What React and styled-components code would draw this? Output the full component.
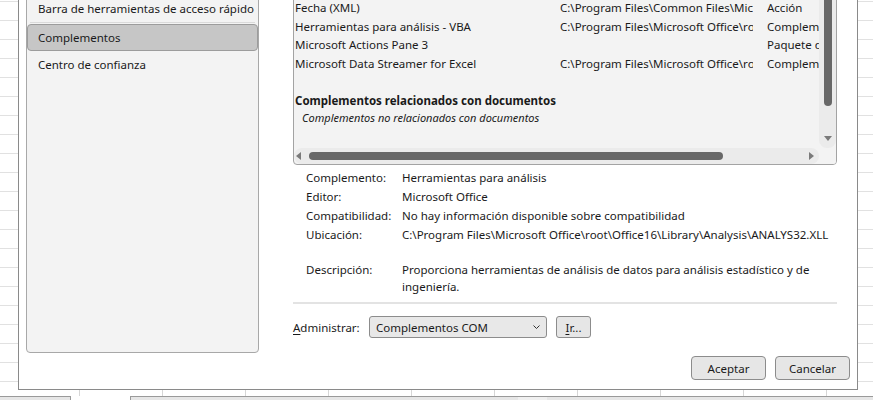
import React from "react";
import styled, { createGlobalStyle } from "styled-components";

const GlobalStyle = createGlobalStyle`
  html, body { margin: 0; padding: 0; background: #fff; }
  body {
    font-family: "Noto Sans", "Open Sans", sans-serif;
    font-size: 11.5px;
    color: #1a1a1a;
  }
  * { box-sizing: border-box; }
`;

const Page = styled.div`
  width: 873px;
  height: 400px;
  overflow: hidden;
  display: flex;
  flex-direction: column;
  background-color: #fff;
  background-image: linear-gradient(#e1e1e1 1px, transparent 1px);
  background-size: 100% 19px;
  background-position: 0 1px;
`;

const Dialog = styled.div`
  margin-top: -20px;
  margin-left: 18px;
  width: 840px;
  height: 410px;
  flex-shrink: 0;
  border: 1px solid #8a8a8a;
  background: #fff;
  display: flex;
  flex-direction: column;
  padding: 0 7px 9px 7px;
`;

const Body = styled.div`
  flex: 1;
  display: flex;
  gap: 34px;
  min-height: 0;
`;

const Nav = styled.div`
  margin-top: 13px;
  width: 233px;
  background: #f3f3f3;
  border: 1px solid #a8a8a8;
  border-radius: 0 0 4px 4px;
  display: flex;
  flex-direction: column;
`;

const NavItem = styled.div`
  height: 27px;
  display: flex;
  align-items: center;
  padding-left: ${(p) => (p.$selected ? "10px" : "11px")};
  white-space: nowrap;
  margin-top: ${(p) => (p.$selected ? "1px" : "0")};
  background: ${(p) => (p.$selected ? "#c6c6c6" : "transparent")};
  border: ${(p) => (p.$selected ? "1px solid #9c9c9c" : "none")};
  border-radius: 4px;
`;

const NavSeparator = styled.div`
  height: 1px;
  margin: 0 3px;
  background: #dadada;
`;

const Right = styled.div`
  margin-top: 13px;
  width: 544px;
  display: flex;
  flex-direction: column;
`;

const ListBox = styled.div`
  height: 171px;
  border: 1px solid #a3a3a3;
  border-radius: 0 0 4px 4px;
  background: #f3f3f3;
  overflow: hidden;
  display: grid;
  grid-template-columns: 1fr 17px;
  grid-template-rows: 1fr 16px;
`;

const ListContent = styled.div`
  overflow: hidden;
  padding: 4px 0 0 1px;
  display: grid;
  grid-template-columns: 265px 193px 1fr;
  grid-auto-rows: min-content;
  align-content: start;
`;

const Cell = styled.div`
  height: 18.5px;
  line-height: 18.5px;
  white-space: nowrap;
  overflow: hidden;
  margin-left: ${(p) => (p.$gap ? "14px" : "0")};
`;

const GroupTitle = styled.div`
  grid-column: 1 / -1;
  height: 18.5px;
  line-height: 18.5px;
  font-weight: 700;
  white-space: nowrap;
`;

const GroupEmpty = styled.div`
  grid-column: 1 / -1;
  height: 15px;
  line-height: 15px;
  padding-left: 7px;
  font-style: italic;
  font-size: 11px;
  white-space: nowrap;
`;

const VScroll = styled.div`
  background: #ebebeb;
  border-radius: 0 0 8px 8px;
  display: flex;
  flex-direction: column;
  align-items: center;
  padding-bottom: 7px;
`;

const VThumb = styled.div`
  width: 8px;
  height: 111px;
  margin-left: 1px;
  background: #686868;
  border-radius: 0 0 4px 4px;
`;

const Spacer = styled.div`
  flex: 1;
`;

const HScroll = styled.div`
  background: #ebebeb;
  border-radius: 8px;
  display: flex;
  align-items: center;
  padding: 0 5px 0 2px;
`;

const HThumb = styled.div`
  width: 414px;
  height: 8px;
  margin-left: 8px;
  background: #686868;
  border-radius: 4px;
`;

const Corner = styled.div`
  background: #f3f3f3;
`;

const Arrow = styled.svg`
  display: block;
  flex-shrink: 0;
`;

const Details = styled.div`
  margin-top: 3px;
  padding-left: 13px;
  display: grid;
  grid-template-columns: 96px 430px;
  grid-auto-rows: 19px;
  align-items: center;
`;

const Label = styled.div`
  white-space: nowrap;
`;

const Value = styled.div`
  white-space: nowrap;
`;

const DescRow = styled.div`
  margin-top: 17px;
  padding-left: 13px;
  display: grid;
  grid-template-columns: 96px 430px;
  line-height: 17px;
`;

const Separator = styled.div`
  margin-top: 7px;
  height: 2px;
  background: #e3e3e3;
`;

const ManageRow = styled.div`
  margin-top: 12px;
  height: 22px;
  display: flex;
  align-items: center;
`;

const ManageLabel = styled.span`
  width: 76px;
  white-space: nowrap;
`;

const Accel = styled.span`
  text-decoration: underline;
  text-underline-offset: 2px;
  text-decoration-thickness: 1px;
`;

const Select = styled.div`
  width: 178px;
  height: 22px;
  border: 1px solid #8c8c8c;
  border-radius: 3px;
  background: #e8e8e8;
  display: flex;
  align-items: center;
  justify-content: space-between;
  padding: 0 6px 0 6px;
`;

const Button = styled.div`
  width: ${(p) => p.$w}px;
  height: ${(p) => p.$h}px;
  margin-left: ${(p) => p.$ml || 0}px;
  border: 1px solid #8c8c8c;
  border-radius: ${(p) => p.$r || 4}px;
  background: #e6e6e6;
  display: flex;
  align-items: center;
  justify-content: center;
  white-space: nowrap;
`;

const Footer = styled.div`
  margin-top: 3px;
  height: 24px;
  display: flex;
  justify-content: flex-end;
  gap: 9px;
`;

const BottomStrip = styled.div`
  height: 10px;
  flex-shrink: 0;
  display: flex;
  flex-direction: column;
  background: #fff;
`;

const ColumnLines = styled.div`
  height: 6px;
  background-image: linear-gradient(90deg, #d6d6d6 1px, transparent 1px);
  background-size: 83px 100%;
  background-position: 79px 0;
`;

const TabBar = styled.div`
  flex: 1;
  display: flex;
`;

const Tab = styled.div`
  width: ${(p) => (p.$w ? `${p.$w}px` : "auto")};
  flex: ${(p) => (p.$w ? "none" : "1")};
  background: ${(p) => (p.$active ? "#fff" : p.$light ? "#f0f0f0" : "#e6e6e6")};
  border-top: 1px solid ${(p) => (p.$active ? "transparent" : "#9a9a9a")};
  border-right: ${(p) => (p.$edge ? "1px solid #9a9a9a" : "none")};
  border-left: ${(p) => (p.$edgeLeft ? "1px solid #9a9a9a" : "none")};
`;

const rows = [
  ["Fecha (XML)", "C:\\Program Files\\Common Files\\Microsoft Shared\\Smart Tag\\MOFL.DLL", "Acción"],
  ["Herramientas para análisis - VBA", "C:\\Program Files\\Microsoft Office\\root\\Office16\\Library\\Analysis\\ATPVBAEN.XLAM", "Complemento de Excel"],
  ["Microsoft Actions Pane 3", "", "Paquete de expansión XML"],
  ["Microsoft Data Streamer for Excel", "C:\\Program Files\\Microsoft Office\\root\\Office16\\ADDINS\\DataStreamer.dll", "Complemento COM"],
  ["", "", ""],
];

const details = [
  ["Complemento:", "Herramientas para análisis"],
  ["Editor:", "Microsoft Office"],
  ["Compatibilidad:", "No hay información disponible sobre compatibilidad"],
  ["Ubicación:", "C:\\Program Files\\Microsoft Office\\root\\Office16\\Library\\Analysis\\ANALYS32.XLL"],
];

export default function App() {
  return (
    <>
      <GlobalStyle />
      <Page>
        <Dialog>
          <Body>
            <Nav>
              <NavItem>Barra de herramientas de acceso rápido</NavItem>
              <NavSeparator />
              <NavItem $selected>Complementos</NavItem>
              <NavItem>Centro de confianza</NavItem>
            </Nav>
            <Right>
              <ListBox>
                <ListContent>
                  {rows.map((r, i) => (
                    <React.Fragment key={i}>
                      <Cell>{r[0]}</Cell>
                      <Cell>{r[1]}</Cell>
                      <Cell $gap>{r[2]}</Cell>
                    </React.Fragment>
                  ))}
                  <GroupTitle>Complementos relacionados con documentos</GroupTitle>
                  <GroupEmpty>Complementos no relacionados con documentos</GroupEmpty>
                </ListContent>
                <VScroll>
                  <VThumb />
                  <Spacer />
                  <Arrow width="8" height="5" viewBox="0 0 8 5">
                    <path d="M0 0 L8 0 L4 5 Z" fill="#7a7a7a" />
                  </Arrow>
                </VScroll>
                <HScroll>
                  <Arrow width="5" height="8" viewBox="0 0 5 8">
                    <path d="M5 0 L5 8 L0 4 Z" fill="#7a7a7a" />
                  </Arrow>
                  <HThumb />
                  <Spacer />
                  <Arrow width="5" height="8" viewBox="0 0 5 8">
                    <path d="M0 0 L0 8 L5 4 Z" fill="#7a7a7a" />
                  </Arrow>
                </HScroll>
                <Corner />
              </ListBox>
              <Details>
                {details.map(([l, v]) => (
                  <React.Fragment key={l}>
                    <Label>{l}</Label>
                    <Value>{v}</Value>
                  </React.Fragment>
                ))}
              </Details>
              <DescRow>
                <Label>Descripción:</Label>
                <div>Proporciona herramientas de análisis de datos para análisis estadístico y de ingeniería.</div>
              </DescRow>
              <Separator />
              <ManageRow>
                <ManageLabel>
                  <Accel>A</Accel>dministrar:
                </ManageLabel>
                <Select>
                  <span>Complementos COM</span>
                  <Arrow width="7" height="4" viewBox="0 0 7 4">
                    <path d="M0.5 0.5 L3.5 3.5 L6.5 0.5" fill="none" stroke="#333" strokeWidth="1" />
                  </Arrow>
                </Select>
                <Button $w={35} $h={22} $ml={9} $r={3}>
                  <span>
                    <Accel>I</Accel>r...
                  </span>
                </Button>
              </ManageRow>
            </Right>
          </Body>
          <Footer>
            <Button $w={75} $h={24}>Aceptar</Button>
            <Button $w={75} $h={24}>Cancelar</Button>
          </Footer>
        </Dialog>
        <BottomStrip>
          <ColumnLines />
          <TabBar>
            <Tab $w={71} $edge />
            <Tab $w={59} $active />
            <Tab $w={388} $edgeLeft />
            <Tab $w={29} $light />
            <Tab />
          </TabBar>
        </BottomStrip>
      </Page>
    </>
  );
}
